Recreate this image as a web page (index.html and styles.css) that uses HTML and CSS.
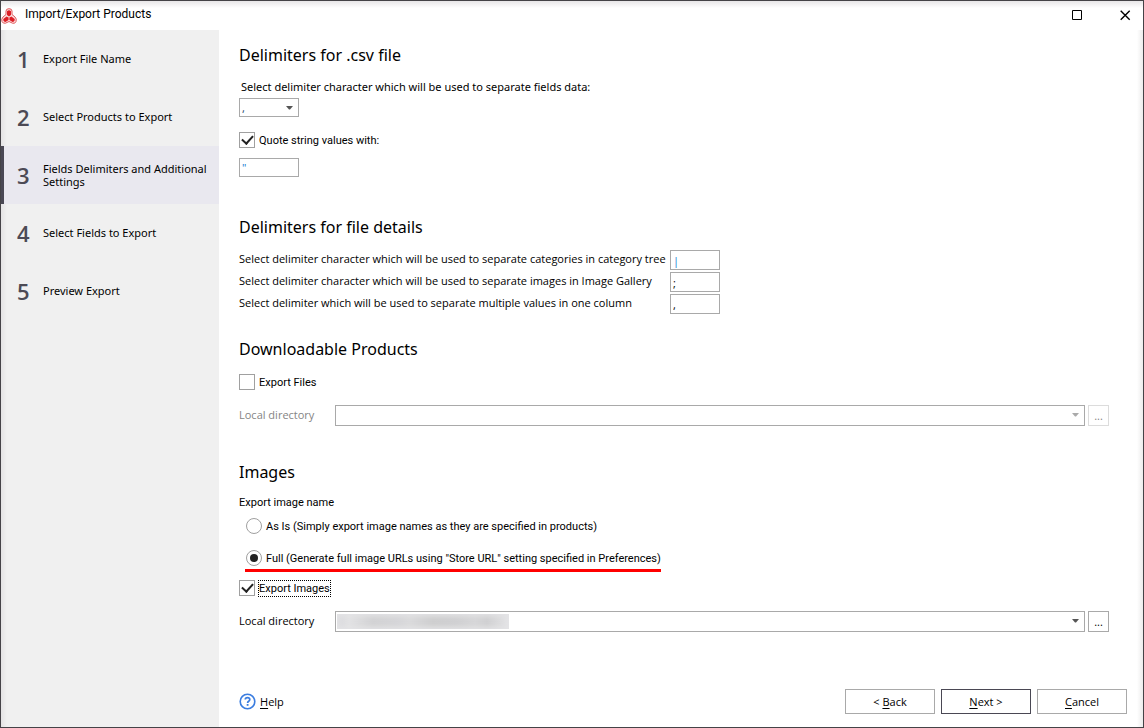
FILE: index.html
```html
<!DOCTYPE html>
<html lang="en">
<head>
<meta charset="utf-8">
<title>Import/Export Products</title>
<link rel="stylesheet" href="styles.css">
</head>
<body>
<div class="window">
  <header class="titlebar">
    <svg class="logo" width="16" height="16" viewBox="0 0 16 16" aria-hidden="true">
      <path d="M5 6.500V3Q5 .700 8 .700T11 3V6.500L14 9Q16 11 15 13.500T11.500 15.200L8 13.500L4.500 15.200Q2 15.800 1 13.500T2 9Z" fill="#fbe3e2" stroke="#e0565a"/>
      <g fill="#dd1f26">
        <path d="M6 3.200Q8 1.400 10 3.200V7L8 8.600L6 7Z"/>
        <path d="M5.500 8.500L7.600 9.600V12L4.500 13.900Q2 13.700 2.300 11Z"/>
        <path d="M10.500 8.500L8.400 9.600V12L11.500 13.900Q14 13.700 13.700 11Z"/>
      </g>
    </svg>
    <span class="title">Import/Export Products</span>
    <button class="winbtn" type="button" aria-label="Maximize"><svg width="11" height="11" viewBox="0 0 11 11"><path d="M.5.5h9v9h-9z" fill="none" stroke="#000"/></svg></button>
    <button class="winbtn" type="button" aria-label="Close"><svg width="11" height="11" viewBox="0 0 11 11"><path d="M.7.700l9 9M9.700.700l-9 9" fill="none" stroke="#000" stroke-width="1.400"/></svg></button>
  </header>
  <div class="body">
    <nav class="steps">
      <a class="step" href="#"><span class="num">1</span><span>Export File Name</span></a>
      <a class="step" href="#"><span class="num">2</span><span>Select Products to Export</span></a>
      <a class="step active" href="#" aria-current="step"><span class="num">3</span><span>Fields Delimiters and Additional Settings</span></a>
      <a class="step" href="#"><span class="num">4</span><span>Select Fields to Export</span></a>
      <a class="step" href="#"><span class="num">5</span><span>Preview Export</span></a>
    </nav>
    <main class="content">
      <form class="form">
        <section class="csv">
          <h2>Delimiters for .csv file</h2>
          <label class="caption indent" for="delim">Select delimiter character which will be used to separate fields data:</label>
          <div class="combo small">
            <select id="delim"><option>,</option></select>
            <svg class="arrow" width="7" height="4" viewBox="0 0 7 4"><path d="M0 0h7L4 3.500H3z" fill="#555"/></svg>
          </div>
          <label class="check quote"><input type="checkbox" checked><span>Quote string values with:</span></label>
          <input class="text wide accent" type="text" value="&quot;" aria-label="Quote character">
        </section>

        <section class="details">
          <h2>Delimiters for file details</h2>
          <div class="pairs">
            <label for="cat">Select delimiter character which will be used to separate categories in category tree</label>
            <input class="text accent" id="cat" type="text" value="|">
            <label for="img">Select delimiter character which will be used to separate images in Image Gallery</label>
            <input class="text" id="img" type="text" value=";">
            <label for="multi">Select delimiter which will be used to separate multiple values in one column</label>
            <input class="text" id="multi" type="text" value=",">
          </div>
        </section>

        <section class="downloads">
          <h2>Downloadable Products</h2>
          <label class="check"><input type="checkbox"><span>Export Files</span></label>
          <div class="directory disabled">
            <label for="dir1">Local directory</label>
            <div class="combo">
              <select id="dir1" disabled><option></option></select>
              <svg class="arrow" width="7" height="4" viewBox="0 0 7 4"><path d="M0 0h7L4 3.500H3z" fill="#aaa"/></svg>
            </div>
            <button class="browse" type="button" disabled>...</button>
          </div>
        </section>

        <section class="images">
          <h2>Images</h2>
          <div class="group" role="radiogroup" aria-labelledby="imgname">
            <div class="legend" id="imgname">Export image name</div>
            <label class="check radio"><input type="radio" name="name"><span>As Is (Simply export image names as they are specified in products)</span></label>
            <label class="check radio full"><input type="radio" name="name" checked><span>Full (Generate full image URLs using "Store URL" setting specified in Preferences)</span></label>
          </div>
          <label class="check export"><input type="checkbox" checked><span class="focused">Export Images</span></label>
          <div class="directory">
            <label for="dir2">Local directory</label>
            <div class="combo">
              <select id="dir2"><option></option></select>
              <span class="redacted"></span>
              <svg class="arrow" width="7" height="4" viewBox="0 0 7 4"><path d="M0 0h7L4 3.500H3z" fill="#555"/></svg>
            </div>
            <button class="browse" type="button">...</button>
          </div>
        </section>
      </form>
      <footer class="footer">
        <a class="help" href="#">
          <svg width="17" height="17" viewBox="0 0 17 17" aria-hidden="true"><circle cx="8.500" cy="8.500" r="7.300" fill="none" stroke="#3b7de0" stroke-width="1.600"/><path d="M6.300 6.500Q6.300 4.600 8.500 4.600T10.800 6.500Q10.800 7.500 9.700 8.200T8.600 10" fill="none" stroke="#3b7de0" stroke-width="1.700"/><path d="M7.700 11h1.800v1.800H7.700z" fill="#3b7de0"/></svg>
          <span><u>H</u>elp</span>
        </a>
        <button class="btn" type="button">&lt; <u>B</u>ack</button>
        <button class="btn primary" type="button"><u>N</u>ext &gt;</button>
        <button class="btn" type="button"><u>C</u>ancel</button>
      </footer>
    </main>
  </div>
</div>
</body>
</html>
```
FILE: styles.css
```css
* { box-sizing: border-box; }
body { margin: 0; background: #fff; color: #000; font: 11px/14px "Open Sans", "Noto Sans", sans-serif; }
button, input, select { font: inherit; color: inherit; margin: 0; }
a { color: inherit; text-decoration: none; }
u { text-underline-offset: 2px; }

.window { min-height: 100vh; display: flex; flex-direction: column; border: 1px solid #454347; background: #fff; }
.titlebar { height: 29px; display: flex; align-items: center; padding-right: 12px; background: linear-gradient(#e8e6e8, #fff 7px); }
.logo { flex: none; }
.title { flex: 1; padding-left: 8px; font: 12px/16px Roboto, sans-serif; margin-bottom: 3px; }
.winbtn { width: 12px; height: 12px; padding: 0; border: 0; background: none; margin-left: 36px; display: grid; place-items: center; }

.body { flex: 1; display: flex; }
.steps { width: 218px; flex: none; background: linear-gradient(90deg, #e4e3e4, #f0f0f0 6px); }
.step { display: flex; align-items: center; height: 58px; padding: 0 8px 1px 14px; font-family: "Noto Sans", sans-serif; line-height: 13px; }
.num { width: 28px; flex: none; padding-left: 2px; color: #4c4a55; font: 600 22px/28px "Open Sans", sans-serif; }
.active { background: #e9e8ef; border-left: 3px solid #4a4854; padding-left: 11px; }

.content { flex: 1; min-width: 0; display: flex; flex-direction: column; background: linear-gradient(270deg, #ececec, #fff 6px); }
.form { flex: 1; padding: 13px 34px 0 20px; }
h2 { margin: 0; font: 400 16px/24px "Noto Sans", sans-serif; }
.caption { display: block; margin: 13px 0 4px; font-family: "Noto Sans", sans-serif; }
.indent { padding-left: 2px; }

.combo { position: relative; display: flex; min-width: 0; }
.combo select { appearance: none; width: 100%; height: 21px; padding: 0 2px; border: 1px solid #a9a9a9; border-radius: 0; background: #fff; opacity: 1; }
.combo.small { width: 60px; }
.small select { height: 19px; line-height: 14px; color: #1b3f6b; }
.arrow { position: absolute; right: 6px; top: 8px; }
.text { width: 50px; height: 20px; padding: 0 2px; border: 1px solid #a9a9a9; background: #fff; display: block; }
.text.wide { width: 60px; height: 19px; }
.accent { color: #1778cf; }

.check { display: flex; width: max-content; align-items: center; gap: 4px; height: 16px; font-family: Roboto, sans-serif; }
.check span { padding-top: 1px; }
.check input { appearance: none; width: 16px; height: 16px; border: 1px solid #a0a0a0; background: #fff; display: grid; place-items: center; }
.check input[type="checkbox"]:checked::before { content: ""; width: 9px; height: 5px; border: solid #222; border-width: 0 0 2px 2px; transform: translateY(-2px) rotate(-48deg); }
.check input[type="radio"] { border-radius: 50%; }
.check input[type="radio"]:checked::before { content: ""; width: 8px; height: 8px; border-radius: 50%; background: #222; }
.quote { margin: 15px 0 10px; }

.details { margin-top: 38px; }
.pairs { margin-top: 11px; display: grid; grid-template-columns: 427px 50px; column-gap: 4px; row-gap: 2px; align-items: center; white-space: nowrap; }
.pairs label { padding-bottom: 2px; }

.downloads { margin-top: 23px; }
.downloads .check { margin-top: 13px; }
.directory { display: grid; grid-template-columns: 93px 1fr 21px; column-gap: 3px; align-items: center; margin-top: 15px; }
.directory label { padding-bottom: 2px; }
.browse { height: 21px; padding: 0; border: 1px solid #a9a9a9; background: #fff; }
.disabled { color: #858585; }
.disabled .browse { border-color: #dcdcdc; }

.images { margin-top: 34px; }
.legend { margin: 12px 0 8px; font-family: Roboto, sans-serif; }
.radio { margin-left: 7px; }
.full { height: 22px; margin: 16px 0 8px 6px; padding: 0 0 3px 1px; border-bottom: 3px solid #f00; }
.focused { outline: 1px dotted #000; }
.redacted { position: absolute; left: 2px; top: 3px; width: 172px; height: 15px; background: linear-gradient(90deg, #d9d9dc 0, #e2e2e4 12px, #d2d2d4 36px, #d5d5d8 60px, #dadadc 72px, #cececf 96px, #d0d0d2 120px, #d6d6d8 138px, #d0d0d2 150px, #e4e4e6 172px); box-shadow: inset 0 0 5px 2px #e4e4e6; }

.footer { display: flex; align-items: center; gap: 6px; padding: 0 16px 13px 20px; }
.help { display: flex; align-items: center; gap: 4px; margin-right: auto; font: 11px/16px "Open Sans", sans-serif; }
.btn { width: 90px; height: 25px; padding: 0; border: 1px solid #a9a9a9; background: #fff; font: 11px/16px "Open Sans", sans-serif; }
.primary { border-color: #4a4854; }
```
